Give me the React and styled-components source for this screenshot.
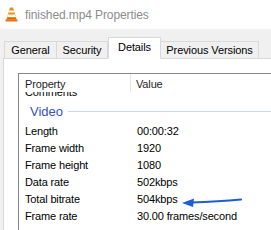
import React from 'react';
import styled, { createGlobalStyle } from 'styled-components';

const GlobalStyle = createGlobalStyle`
  html, body {
    margin: 0;
    padding: 0;
    background: #f0f0f0;
    overflow: hidden;
  }
  body {
    font-family: "Liberation Sans", Arial, sans-serif;
  }
`;

const Window = styled.div`
  width: 271px;
  height: 230px;
  overflow: hidden;
  background: #f0f0f0;
  display: flex;
  flex-direction: column;
`;

const TitleBar = styled.div`
  height: 29px;
  flex: none;
  background: #ffffff;
  display: flex;
  align-items: center;
  padding-left: 5px;
  gap: 7px;
  font-size: 12px;
  letter-spacing: -0.1px;
  color: #8c8c8c;
`;

const TabStrip = styled.div`
  display: flex;
  align-items: flex-end;
  height: 29px;
  padding-left: 4px;
  flex: none;
`;

const Tab = styled.div`
  height: ${(p) => (p.$active ? '22px' : '17px')};
  margin-bottom: ${(p) => (p.$active ? '-1px' : '0')};
  display: flex;
  align-items: ${(p) => (p.$active ? 'flex-start' : 'center')};
  padding-top: ${(p) => (p.$active ? '3px' : '0')};
  box-sizing: border-box;
  border: 1px solid #d9d9d9;
  border-bottom: ${(p) => (p.$active ? '1px solid #ffffff' : '0')};
  border-left: ${(p) => (p.$first || p.$active ? '1px solid #d9d9d9' : '0')};
  background: ${(p) => (p.$active ? '#ffffff' : '#f0f0f0')};
  font-size: 11px;
  letter-spacing: -0.1px;
  white-space: nowrap;
  color: #000;
  position: relative;
  z-index: ${(p) => (p.$active ? 1 : 0)};
  width: ${(p) => p.$w}px;
  justify-content: center;
`;

const Panel = styled.div`
  flex: 1;
  margin-left: 3px;
  background: #ffffff;
  border-top: 1px solid #d9d9d9;
  border-left: 1px solid #d9d9d9;
  padding: 14px 0 0 14px;
`;

const ListView = styled.div`
  border: 1px solid #828790;
  border-right: 0;
  height: 200px;
  overflow: hidden;
  position: relative;
  font-size: 11px;
  letter-spacing: -0.15px;
  color: #000;
`;

const Header = styled.div`
  display: grid;
  grid-template-columns: 112px 1fr;
  height: 18px;
  background: #ffffff;
  position: relative;
  z-index: 1;
`;

const HeaderCell = styled.div`
  padding-left: ${(p) => (p.$first ? '6px' : '5px')};
  padding-top: 4px;
  color: #1e1e1e;
  border-right: ${(p) => (p.$first ? '1px solid #e5e5e5' : '0')};
`;

const Row = styled.div`
  display: grid;
  grid-template-columns: 112px 1fr;
  height: 17px;
  align-items: center;
  margin-top: ${(p) => p.$offset || 0}px;
`;

const Cell = styled.div`
  padding-left: 6px;
  white-space: nowrap;
  position: relative;
`;

const Group = styled.div`
  display: flex;
  align-items: center;
  height: 21px;
  padding-left: 11px;
  margin-top: 1px;
  gap: 5px;
  font-size: 13px;
  letter-spacing: 0;
  color: #3651c5;
`;

const GroupLine = styled.div`
  flex: 1;
  height: 1px;
  background: #c9d4ef;
`;

const Arrow = styled.svg`
  position: absolute;
  left: 50px;
  top: 0;
`;

function ConeIcon() {
  return (
    <svg width="13" height="15" viewBox="0 0 13 15">
      <path d="M0.5 12.5 L12.5 12.5 L12.5 14.5 L0.5 14.5 Z" fill="#e8720c" />
      <path d="M5 0.5 L8 0.5 L11.5 12.5 L1.5 12.5 Z" fill="#f08a0e" />
      <path d="M4.2 3.5 L8.8 3.5 L9.4 5.6 L3.6 5.6 Z" fill="#ffffff" />
      <path d="M3 7.6 L10 7.6 L10.7 10 L2.3 10 Z" fill="#ffffff" />
      <path d="M1.5 12.5 L11.5 12.5 L11 11 L2 11 Z" fill="#d86a0a" />
    </svg>
  );
}

const rows = [
  ['Length', '00:00:32'],
  ['Frame width', '1920'],
  ['Frame height', '1080'],
  ['Data rate', '502kbps'],
  ['Total bitrate', '504kbps'],
  ['Frame rate', '30.00 frames/second'],
];

export default function App() {
  return (
    <Window>
      <GlobalStyle />
      <TitleBar>
        <ConeIcon />
        <span>finished.mp4 Properties</span>
      </TitleBar>
      <TabStrip>
        <Tab $first $w={53}>General</Tab>
        <Tab $w={51}>Security</Tab>
        <Tab $active $w={53}>Details</Tab>
        <Tab $w={98}>Previous Versions</Tab>
      </TabStrip>
      <Panel>
        <ListView>
          <Header>
            <HeaderCell $first>Property</HeaderCell>
            <HeaderCell>Value</HeaderCell>
          </Header>
          <Row $offset={-9}>
            <Cell>Comments</Cell>
            <Cell />
          </Row>
          <Group>
            <span>Video</span>
            <GroupLine />
          </Group>
          {rows.map(([name, value]) => (
            <Row key={name}>
              <Cell>{name}</Cell>
              <Cell>
                {value}
                {name === 'Total bitrate' && (
                  <Arrow width="66" height="17" viewBox="0 0 66 17">
                    <path d="M10 9.5 C 28 9, 45 8, 60 6.5" stroke="#1a5fd6" strokeWidth="2.2" fill="none" strokeLinecap="round" />
                    <path d="M1 10 L13 5.5 L12 14 Z" fill="#1a5fd6" />
                  </Arrow>
                )}
              </Cell>
            </Row>
          ))}
        </ListView>
      </Panel>
    </Window>
  );
}
